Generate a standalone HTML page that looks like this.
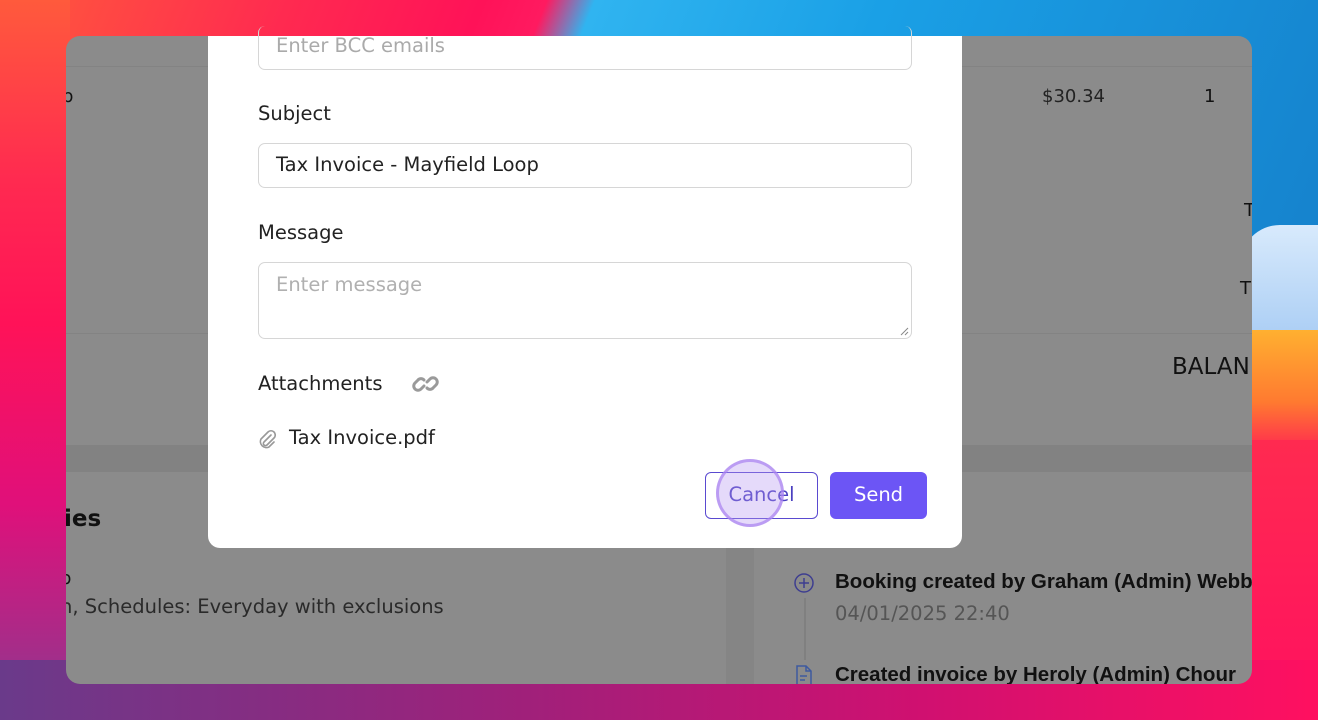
<!DOCTYPE html>
<html style="overflow:hidden"><head><meta charset="utf-8"><style>
*{margin:0;padding:0;box-sizing:border-box}
html,body{width:1318px;height:720px;overflow:hidden}
body{position:relative;font-family:"DejaVu Sans","Liberation Sans",sans-serif;
background:linear-gradient(112deg,#ff5a3c 0%,#ff2a50 18%,#ff1258 30%,#ff1a60 34%,#30b4f0 37%,#1aa0e6 55%,#1478c4 100%);}
.r1{position:absolute;left:1240px;top:225px;width:78px;height:120px;background:linear-gradient(180deg,#d8eafc,#a8ccf4);border-radius:40px 0 0 0}
.r2{position:absolute;left:1240px;top:330px;width:78px;height:120px;background:linear-gradient(180deg,#ffb030,#ff7a30 60%,#ff2a50)}
.r3{position:absolute;left:1240px;top:440px;width:78px;height:280px;background:linear-gradient(180deg,#ff2a50,#ff1060)}
.l1{position:absolute;left:0;top:0;width:70px;height:720px;background:linear-gradient(180deg,#ff5a3c 0%,#ff2a50 25%,#ff1258 45%,#e0107a 70%,#8a3a90 100%)}
.bot{position:absolute;left:0;top:660px;width:1318px;height:60px;background:linear-gradient(90deg,#6a3a8a 0%,#a0207a 40%,#d01070 70%,#ff1060 100%)}
.win{position:absolute;left:66px;top:36px;width:1186px;height:648px;border-radius:14px;background:#8b8b8b;overflow:hidden;color:#111}
.ln{position:absolute;left:0;right:0;height:1px;background:#838383}
.t{position:absolute;font-size:18px;white-space:nowrap}
.b{font-family:"Liberation Sans",sans-serif;font-weight:bold;font-size:20.5px}
.modal{position:absolute;left:208px;top:36px;width:754px;height:512px;background:#fff;border-radius:0 0 12px 12px}
.lab{position:absolute;left:50px;font-size:19.5px;color:#222}
.inp{position:absolute;left:50px;width:654px;border:1.5px solid #d6d6d6;border-radius:7px;font-size:19.5px;padding-left:17px}
</style></head><body>
<div class="r1"></div><div class="r2"></div><div class="r3"></div><div class="l1"></div>
<div class="bot"></div>
<div class="win">
 <div class="ln" style="top:30px"></div>
 <div class="t" style="left:-4px;top:50px">p</div>
 <div class="t" style="left:976px;top:50px;color:#222">$30.34</div>
 <div class="t" style="left:1138px;top:50px">1</div>
 <div class="t" style="left:1178px;top:164px">T</div>
 <div class="t" style="left:1174px;top:242px">T</div>
 <div class="ln" style="top:297px"></div>
 <div class="t" style="left:1106px;top:318px;font-size:23px">BALAN</div>
 <div style="position:absolute;left:0;right:0;top:409px;height:27px;background:#828282"></div>
 <div style="position:absolute;left:660px;width:28px;top:436px;bottom:0;background:#858585"></div>
 <div class="t" style="left:-13px;top:470px;font-size:23px;font-weight:bold">ties</div>
 <div class="t" style="left:-6px;top:532px">p</div>
 <div class="t" style="left:-6px;top:559px;color:#2a2a2a;font-size:19.5px">n, Schedules: Everyday with exclusions</div>
 <svg style="position:absolute;left:727px;top:536px" width="22" height="22" viewBox="0 0 22 22"><circle cx="11" cy="11" r="9" fill="none" stroke="#3e3e90" stroke-width="1.5"/><path d="M11 6v10M6 11h10" stroke="#3e3e90" stroke-width="1.5"/></svg>
 <div style="position:absolute;left:738px;top:562px;width:2px;height:62px;background:#808080"></div>
 <div class="t b" style="left:769px;top:534px">Booking created by Graham (Admin) Webb</div>
 <div class="t" style="left:769px;top:566px;color:#555;font-size:19.5px">04/01/2025 22:40</div>
 <svg style="position:absolute;left:729px;top:629px" width="18" height="22" viewBox="0 0 18 22"><path d="M2 1h9l5 5v15H2z M11 1v5h5 M5 11h7 M5 15h5" fill="none" stroke="#3e5aa0" stroke-width="1.5"/></svg>
 <div class="t b" style="left:769px;top:627px">Created invoice by Heroly (Admin) Chour</div>
</div>
<div class="modal">
 <div class="inp" style="top:-10px;height:44px;line-height:40px;color:#aaa;border-top:none">Enter BCC emails</div>
 <div class="lab" style="top:66px">Subject</div>
 <div class="inp" style="top:107px;height:45px;line-height:42px;color:#222">Tax Invoice - Mayfield Loop</div>
 <div class="lab" style="top:185px">Message</div>
 <div class="inp" style="top:226px;height:77px;padding-top:10px;color:#b0b0b0">Enter message
  <svg style="position:absolute;right:2px;bottom:2px" width="10" height="10"><path d="M9 2L2 9M9 6L6 9" stroke="#888" stroke-width="1"/></svg></div>
 <div class="lab" style="top:336px">Attachments</div>
 <svg style="position:absolute;left:204px;top:337px" width="28" height="22" viewBox="0 0 28 22"><g fill="none" stroke="#9a9a9a" stroke-width="3" stroke-linecap="round"><path d="M12 13l-3 3a4 4 0 0 1-6-6l3-3a4 4 0 0 1 6 0"/><path d="M15 9l3-3a4 4 0 0 1 6 6l-3 3a4 4 0 0 1-6 0"/></g></svg>
 <svg style="position:absolute;left:50px;top:393px" width="18" height="20" viewBox="0 0 18 20"><path d="M13 6l-7 7a2 2 0 0 0 3 3l7-7a4 4 0 0 0-6-6l-7 7a6 6 0 0 0 8 8l5-5" fill="none" stroke="#999" stroke-width="1.6" stroke-linecap="round"/></svg>
 <div class="lab" style="top:390px;left:81px">Tax Invoice.pdf</div>
 <div style="position:absolute;left:497px;top:436px;width:113px;height:47px;border:1.5px solid #5a4ad0;border-radius:6px;color:#4a3fc0;font-size:19.5px;text-align:center;line-height:44px">Cancel</div>
 <div style="position:absolute;left:508px;top:423px;width:68px;height:68px;border-radius:50%;background:rgba(180,150,240,.35);border:3px solid rgba(170,130,240,.7)"></div>
 <div style="position:absolute;left:622px;top:436px;width:97px;height:47px;background:#6c55f5;border-radius:6px;color:#fff;font-size:19.5px;text-align:center;line-height:46px">Send</div>
</div>
</body></html>
